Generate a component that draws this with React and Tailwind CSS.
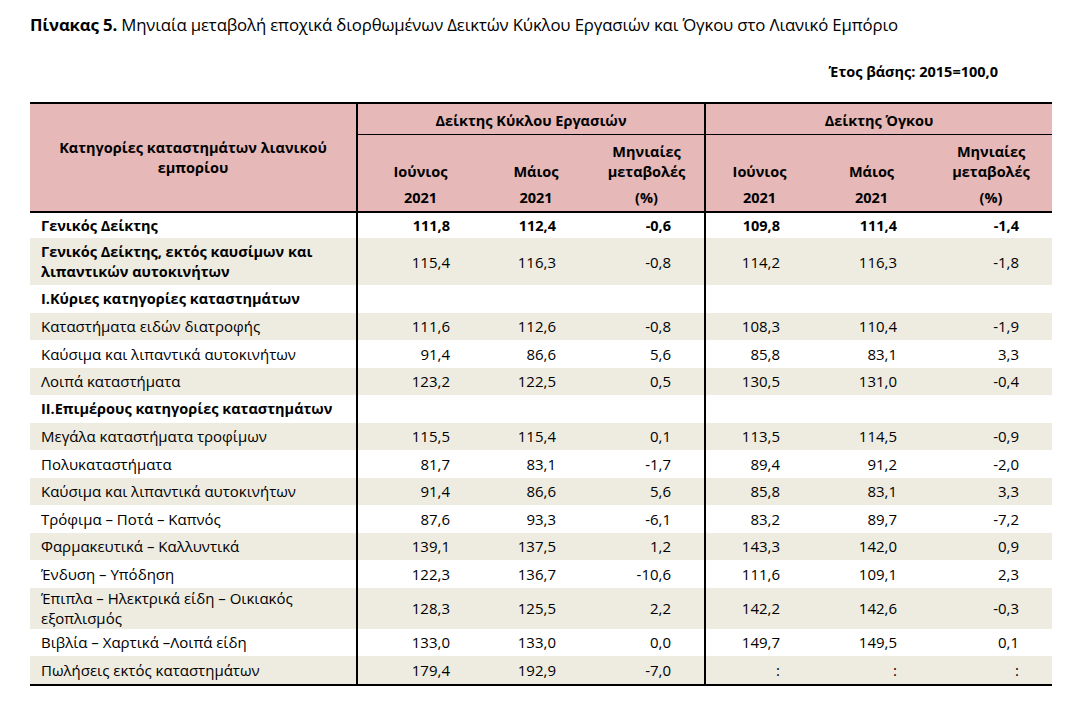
import React from 'react';

const rows = [
    { label: 'Γενικός Δείκτης', bold: true, boldValues: true, values: ['111,8', '112,4', '-0,6', '109,8', '111,4', '-1,4'], h: 'h-[26px]' },
    { label: <>Γενικός Δείκτης, εκτός καυσίμων και<br />λιπαντικών αυτοκινήτων</>, bold: true, values: ['115,4', '116,3', '-0,8', '114,2', '116,3', '-1,8'], h: 'h-[47px]' },
    { label: 'Ι.Κύριες κατηγορίες καταστημάτων', bold: true, values: ['', '', '', '', '', ''] },
    { label: 'Καταστήματα ειδών διατροφής', values: ['111,6', '112,6', '-0,8', '108,3', '110,4', '-1,9'] },
    { label: 'Καύσιμα και λιπαντικά αυτοκινήτων', values: ['91,4', '86,6', '5,6', '85,8', '83,1', '3,3'] },
    { label: 'Λοιπά καταστήματα', values: ['123,2', '122,5', '0,5', '130,5', '131,0', '-0,4'] },
    { label: 'ΙΙ.Επιμέρους κατηγορίες καταστημάτων', bold: true, values: ['', '', '', '', '', ''] },
    { label: 'Μεγάλα καταστήματα τροφίμων', values: ['115,5', '115,4', '0,1', '113,5', '114,5', '-0,9'] },
    { label: 'Πολυκαταστήματα', values: ['81,7', '83,1', '-1,7', '89,4', '91,2', '-2,0'] },
    { label: 'Καύσιμα και λιπαντικά αυτοκινήτων', values: ['91,4', '86,6', '5,6', '85,8', '83,1', '3,3'] },
    { label: 'Τρόφιμα – Ποτά – Καπνός', values: ['87,6', '93,3', '-6,1', '83,2', '89,7', '-7,2'] },
    { label: 'Φαρμακευτικά – Καλλυντικά', values: ['139,1', '137,5', '1,2', '143,3', '142,0', '0,9'] },
    { label: 'Ένδυση – Υπόδηση', values: ['122,3', '136,7', '-10,6', '111,6', '109,1', '2,3'] },
    { label: <>Έπιπλα – Ηλεκτρικά είδη – Οικιακός<br />εξοπλισμός</>, values: ['128,3', '125,5', '2,2', '142,2', '142,6', '-0,3'], h: 'h-[41px]' },
    { label: 'Βιβλία – Χαρτικά –Λοιπά είδη', values: ['133,0', '133,0', '0,0', '149,7', '149,5', '0,1'] },
    { label: 'Πωλήσεις εκτός καταστημάτων', values: ['179,4', '192,9', '-7,0', ':', ':', ':'], h: 'h-[29px]' },
];

const App = () => {
    return (
        <div className="min-h-screen bg-white text-black pl-[30px] pt-[14px] font-['Open_Sans',sans-serif]">
            <h1 className="text-[16.8px] leading-[22px] font-normal tracking-[-0.15px]">
                <span className="font-bold">Πίνακας 5.</span> Μηνιαία μεταβολή εποχικά διορθωμένων Δεικτών Κύκλου Εργασιών και Όγκου στο Λιανικό Εμπόριο
            </h1>

            <div className="w-[1022px] flex justify-end pr-[54px] mt-[26px]">
                <span className="text-[14.5px] font-bold leading-[20px]">Έτος βάσης: 2015=100,0</span>
            </div>

            <table className="mt-[20px] w-[1022px] table-fixed border-collapse text-[15px] leading-[20px]">
                <colgroup>
                    <col className="w-[327px]" />
                    <col className="w-[126px]" />
                    <col className="w-[106px]" />
                    <col className="w-[116px]" />
                    <col className="w-[108px]" />
                    <col className="w-[117px]" />
                    <col className="w-[122px]" />
                </colgroup>
                <thead className="bg-[#e6b8b7] text-[14.5px] font-bold">
                    <tr className="h-[31px] border-t-2 border-black">
                        <th rowSpan={3} className="font-bold text-center align-middle px-6 border-b-2 border-black">
                            Κατηγορίες καταστημάτων λιανικού<br />εμπορίου
                        </th>
                        <th colSpan={3} className="font-bold text-center align-bottom pb-[3px] border-l-2 border-b border-black">
                            Δείκτης Κύκλου Εργασιών
                        </th>
                        <th colSpan={3} className="font-bold text-center align-bottom pb-[3px] border-l-2 border-b border-black">
                            Δείκτης Όγκου
                        </th>
                    </tr>
                    <tr className="h-[51px]">
                        <th className="font-bold text-center align-bottom pb-[3px] border-l-2 border-black">Ιούνιος</th>
                        <th className="font-bold text-center align-bottom pb-[3px]">Μάιος</th>
                        <th className="font-bold text-center align-bottom pb-[3px]">Μηνιαίες<br />μεταβολές</th>
                        <th className="font-bold text-center align-bottom pb-[3px] border-l-2 border-black">Ιούνιος</th>
                        <th className="font-bold text-center align-bottom pb-[3px]">Μάιος</th>
                        <th className="font-bold text-center align-bottom pb-[3px]">Μηνιαίες<br />μεταβολές</th>
                    </tr>
                    <tr className="h-[27px] border-b-2 border-black">
                        <th className="font-bold text-center border-l-2 border-black">2021</th>
                        <th className="font-bold text-center">2021</th>
                        <th className="font-bold text-center">(%)</th>
                        <th className="font-bold text-center border-l-2 border-black">2021</th>
                        <th className="font-bold text-center">2021</th>
                        <th className="font-bold text-center">(%)</th>
                    </tr>
                </thead>
                <tbody className="border-b-2 border-black">
                    {rows.map((row, i) => (
                        <tr key={i} className={`${row.h || 'h-[27.5px]'} ${i % 2 === 1 ? 'bg-[#eeece1]' : 'bg-white'}`}>
                            <td className={`pl-[11px] pr-2 align-middle ${row.bold ? 'font-bold text-[14.5px]' : ''}`}>{row.label}</td>
                            {row.values.map((v, j) => (
                                <td
                                    key={j}
                                    className={`text-right pr-[33px] align-middle ${row.boldValues ? 'font-bold text-[14.5px]' : ''} ${j === 0 || j === 3 ? 'border-l-2 border-black' : ''}`}
                                >
                                    {v}
                                </td>
                            ))}
                        </tr>
                    ))}
                </tbody>
            </table>
        </div>
    );
};

export default App;
